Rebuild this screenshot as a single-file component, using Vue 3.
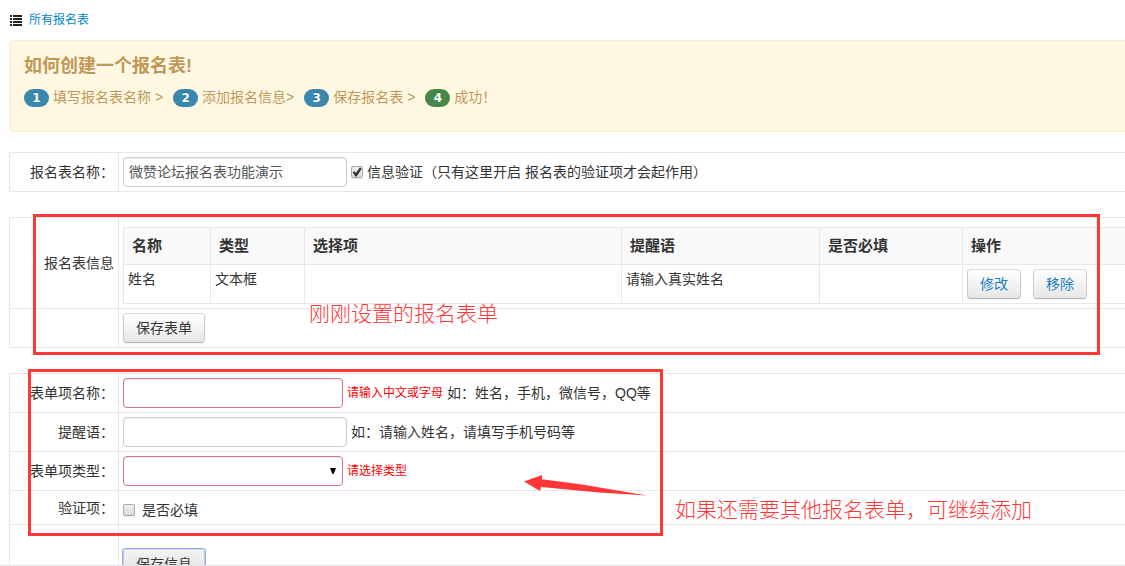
<script setup>
import { ref } from 'vue'

const formName = ref('微赞论坛报名表功能演示')
const verify = ref(true)
const required = ref(false)
const steps = [
  { n: 1, text: '填写报名表名称 >' },
  { n: 2, text: '添加报名信息>' },
  { n: 3, text: '保存报名表 >' },
  { n: 4, text: '成功！', done: true }
]
const fields = [{ name: '姓名', type: '文本框', options: '', tip: '请输入真实姓名', required: '' }]
</script>

<template>
  <main class="page">
    <nav class="crumb">
      <svg class="list-icon" viewBox="0 0 12 11" aria-hidden="true">
        <path d="M0 0h2v2H0zM3 0h9v2H3zM0 3h2v2H0zM3 3h9v2H3zM0 6h2v2H0zM3 6h9v2H3zM0 9h2v2H0zM3 9h9v2H3z" fill="#222" />
      </svg>
      <a href="#">所有报名表</a>
    </nav>

    <section class="alert">
      <h4>如何创建一个报名表!</h4>
      <div class="steps">
        <span v-for="s in steps" :key="s.n" class="step">
          <span class="badge" :class="{ done: s.done }">{{ s.n }}</span>{{ s.text }}
        </span>
      </div>
    </section>

    <table class="form">
      <tbody>
        <tr>
          <th scope="row"><label for="form-name">报名表名称：</label></th>
          <td>
            <div class="line">
              <input id="form-name" v-model="formName" class="text" type="text" />
              <input id="verify" v-model="verify" class="check" type="checkbox" />
              <label for="verify">信息验证（只有这里开启 报名表的验证项才会起作用）</label>
            </div>
          </td>
        </tr>
      </tbody>
    </table>

    <table class="form">
      <tbody>
        <tr>
          <th scope="row">报名表信息</th>
          <td class="nest">
            <table class="grid">
              <colgroup>
                <col class="c-name" /><col class="c-type" /><col /><col class="c-tip" /><col class="c-req" /><col class="c-act" />
              </colgroup>
              <thead>
                <tr><th>名称</th><th>类型</th><th>选择项</th><th>提醒语</th><th>是否必填</th><th>操作</th></tr>
              </thead>
              <tbody>
                <tr v-for="f in fields" :key="f.name">
                  <td>{{ f.name }}</td>
                  <td>{{ f.type }}</td>
                  <td>{{ f.options }}</td>
                  <td>{{ f.tip }}</td>
                  <td>{{ f.required }}</td>
                  <td>
                    <div class="actions">
                      <button class="btn link" type="button">修改</button>
                      <button class="btn link" type="button">移除</button>
                    </div>
                  </td>
                </tr>
              </tbody>
            </table>
          </td>
        </tr>
        <tr>
          <th></th>
          <td><div class="line"><button class="btn" type="button">保存表单</button></div></td>
        </tr>
      </tbody>
    </table>

    <table class="form">
      <tbody>
        <tr>
          <th scope="row"><label for="item-name">表单项名称：</label></th>
          <td>
            <div class="line">
              <input id="item-name" class="text must" type="text" />
              <span class="error">请输入中文或字母</span>
              <span>如：姓名，手机，微信号，QQ等</span>
            </div>
          </td>
        </tr>
        <tr>
          <th scope="row"><label for="item-tip">提醒语：</label></th>
          <td>
            <div class="line">
              <input id="item-tip" class="text" type="text" />
              <span>如：请输入姓名，请填写手机号码等</span>
            </div>
          </td>
        </tr>
        <tr>
          <th scope="row"><label for="item-type">表单项类型：</label></th>
          <td>
            <div class="line">
              <span class="select">
                <select id="item-type" class="text must">
                  <option value=""></option>
                  <option value="text">文本框</option>
                </select>
                <svg viewBox="0 0 6 6" aria-hidden="true"><path d="M0 0h6L3.6 6H2.4z" fill="#000" /></svg>
              </span>
              <span class="error">请选择类型</span>
            </div>
          </td>
        </tr>
        <tr>
          <th scope="row">验证项：</th>
          <td class="short">
            <div class="option">
              <input id="required" v-model="required" class="check" type="checkbox" />
              <label for="required">是否必填</label>
            </div>
          </td>
        </tr>
        <tr>
          <th></th>
          <td class="last"><button class="btn focused" type="button">保存信息</button></td>
        </tr>
      </tbody>
    </table>

    <div class="mark mark-list"></div>
    <div class="mark mark-item"></div>
    <p class="note note-list">刚刚设置的报名表单</p>
    <p class="note note-item">如果还需要其他报名表单，可继续添加</p>
    <svg class="arrow" viewBox="0 0 124 18" aria-hidden="true">
      <path d="M0 7.500 18 1v4.200L58 10.500 123 21.500 75 18.500 17 13 16 17z" fill="#ff3737" />
    </svg>
  </main>
</template>

<style>
body {
  background: #fff;
}
</style>

<style scoped>
* {
  box-sizing: border-box;
}
.page {
  position: relative;
  height: 100vh;
  overflow: hidden;
  padding-left: 9px;
  border-bottom: 1px solid #e5e5e5;
  color: #333;
  font: 14px/20px "Liberation Sans", "Noto Sans CJK SC", sans-serif;
}
.crumb {
  display: flex;
  align-items: center;
  gap: 7px;
  height: 40px;
  padding-left: 1px;
  font-size: 12px;
}
.crumb a {
  color: #08c;
  text-decoration: none;
}
.list-icon {
  width: 12px;
  height: 11px;
}
.alert {
  height: 92px;
  margin-bottom: 20px;
  padding: 14px;
  border: 1px solid #fbeed5;
  border-right: 0;
  border-radius: 4px 0 0 4px;
  background: #fef7e2;
  color: #c09853;
  text-shadow: 0 1px 0 rgba(255, 255, 255, 0.5);
}
.alert h4 {
  margin: 0 0 10px;
  font-size: 18px;
  line-height: 22px;
}
.steps {
  display: flex;
  gap: 10px;
}
.step {
  display: flex;
  align-items: flex-end;
  white-space: nowrap;
}
.badge {
  width: 25px;
  height: 18px;
  margin-right: 4px;
  border-radius: 9px;
  background: #3a87ad;
  color: #fff;
  font: bold 12px/18px "DejaVu Sans", sans-serif;
  text-align: center;
  text-shadow: 0 -1px 0 rgba(0, 0, 0, 0.25);
}
.badge.done {
  background: #468847;
}
.form {
  width: 100%;
  margin-bottom: 25px;
  border-collapse: separate;
  border-spacing: 0;
  table-layout: fixed;
}
.form > tbody > tr > th,
.form > tbody > tr > td {
  padding: 4px;
  border-top: 1px solid #e8e8e8;
  border-left: 1px solid #e8e8e8;
}
.form > tbody > tr:last-child > th,
.form > tbody > tr:last-child > td {
  border-bottom: 1px solid #e8e8e8;
}
.form > tbody > tr > th {
  width: 109px;
  font-weight: normal;
  text-align: right;
  white-space: nowrap;
}
.form > tbody > tr > .nest {
  padding: 9px 0 4px 4px;
}
.form > tbody > tr > .short {
  padding: 9px 4px 4px;
}
.form > tbody > tr > .last {
  height: 80px;
  vertical-align: top;
  padding-top: 24px;
}
.line {
  display: flex;
  align-items: center;
  gap: 4px;
  height: 30px;
  white-space: nowrap;
}
.option {
  display: flex;
  align-items: center;
  gap: 7px;
}
.grid {
  width: 100%;
  border-collapse: separate;
  border-spacing: 0;
  table-layout: fixed;
  border-bottom: 1px solid #e8e8e8;
}
.grid th,
.grid td {
  border-top: 1px solid #e8e8e8;
  border-left: 1px solid #e8e8e8;
  text-align: left;
  vertical-align: top;
}
.grid th {
  padding: 8px;
  background: #f9f9f9;
  font-size: 15px;
}
.grid td {
  padding: 4px;
}
.c-name {
  width: 87px;
}
.c-type {
  width: 94px;
}
.c-tip {
  width: 198px;
}
.c-req {
  width: 143px;
}
.c-act {
  width: 163px;
}
.actions {
  display: flex;
  gap: 12px;
}
.text {
  width: 224px;
  height: 30px;
  margin: 0;
  padding: 3px 5px 5px;
  border: 1px solid #ccc;
  border-radius: 4px;
  background: #fff;
  box-shadow: inset 0 1px 1px rgba(0, 0, 0, 0.075);
  color: #555;
  font: inherit;
}
.must {
  width: 220px;
  border-color: #d87093;
}
.select {
  position: relative;
  display: flex;
}
.select select {
  appearance: none;
}
.select svg {
  position: absolute;
  top: 12px;
  right: 7px;
  width: 6px;
  height: 6px;
  pointer-events: none;
}
.error {
  color: #f00;
  font-size: 12px;
}
.check {
  appearance: none;
  display: grid;
  place-items: center;
  width: 12px;
  height: 12px;
  margin: 0;
  border: 1px solid #a9a9a9;
  border-radius: 2px;
  background: linear-gradient(#eee, #dcdcdc);
  box-shadow: 0 1px 1px rgba(0, 0, 0, 0.1);
}
.check:checked::after {
  content: "";
  width: 10px;
  height: 10px;
  background: #333;
  clip-path: polygon(8% 52%, 26% 42%, 40% 60%, 78% 6%, 98% 18%, 46% 94%, 34% 94%);
}
.btn {
  height: 30px;
  padding: 4px 12px;
  border: 1px solid #ccc;
  border-color: #d9d9d9 #ccc #b3b3b3;
  border-radius: 4px;
  background: linear-gradient(#fff, #e6e6e6);
  box-shadow: inset 0 1px 0 rgba(255, 255, 255, 0.2), 0 1px 2px rgba(0, 0, 0, 0.05);
  color: #333;
  font: inherit;
  text-shadow: 0 1px 1px rgba(255, 255, 255, 0.75);
}
.btn.link {
  color: #1a7fc1;
}
.btn.focused {
  border-radius: 2px;
  background: linear-gradient(#f2f2f2, #e0e0e0);
  outline: 1px solid #82acf0;
}
.mark {
  position: absolute;
  border: 3px solid #ff3737;
  pointer-events: none;
}
.mark-list {
  top: 214px;
  right: 25px;
  left: 33px;
  height: 141px;
}
.mark-item {
  top: 369px;
  left: 28px;
  width: 635px;
  height: 167px;
}
.note {
  position: absolute;
  margin: 0;
  color: #ff3737;
  font-size: 21px;
  font-weight: 300;
  line-height: 28px;
  white-space: nowrap;
}
.note-list {
  top: 300px;
  left: 309px;
}
.note-item {
  top: 496px;
  left: 675px;
}
.arrow {
  position: absolute;
  top: 474px;
  left: 524px;
  width: 124px;
  height: 18px;
  overflow: visible;
}
</style>
